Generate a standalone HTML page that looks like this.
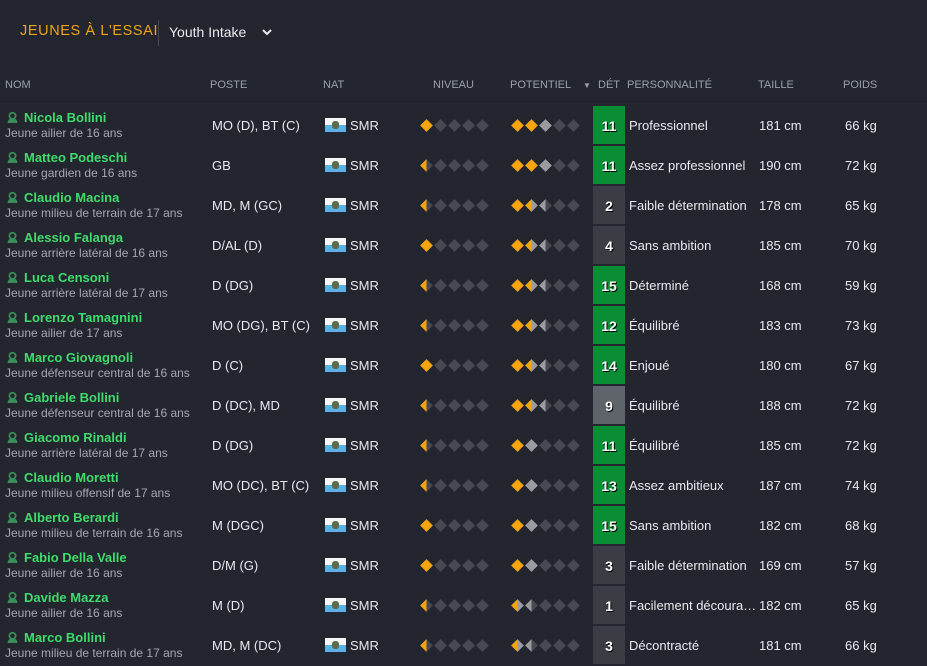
<!DOCTYPE html>
<html><head><meta charset="utf-8"><style>
body{margin:0;width:927px;height:662px;background:#23262f;font-family:"Liberation Sans",sans-serif;overflow:hidden;position:relative;color:#e6e8ea}
.title{position:absolute;left:20px;top:23px;color:#f0a21a;font-size:14.5px;letter-spacing:.6px}
.sep{position:absolute;left:158px;top:20px;width:1px;height:26px;background:#444852}
.yi{position:absolute;left:169px;top:24px;font-size:14px;color:#e8eaee}
.chev{position:absolute;left:262px;top:28px}
.hdr{position:absolute;top:79px;font-size:11px;color:#9aa0aa}
.hline{position:absolute;left:0;top:101px;width:927px;height:1px;background:#1d2027}
.row{position:absolute;left:0;width:927px;height:40px}
.nm{position:absolute;left:24px;top:5px;font-weight:bold;font-size:13px;color:#3ddc6c}
.ic{position:absolute;left:7px;top:7px;width:11px;height:11px}
.sub{position:absolute;left:5px;top:21px;font-size:12px;color:#a4a8b0}
.v{position:absolute;top:13px;font-size:13px;color:#e8eaee}
.flag{position:absolute;left:325px;top:13px;width:21px;height:14px;background:linear-gradient(#f4f6f8 50%,#5eb1e6 50%)}
.flag:after{content:"";position:absolute;left:7px;top:3px;width:7px;height:8px;border-radius:3px;background:#5c6b4a}
.dm{position:absolute;top:16px}
.d{position:absolute;width:9px;height:9px;transform:rotate(45deg);background:#474a52}
.F{background:#f6a412}.G{background:#9a9ca0}
.H{background:linear-gradient(45deg,#f6a412 50%,#474a52 50%)}
.HG{background:linear-gradient(45deg,#f6a412 50%,#9a9ca0 50%)}
.g{background:linear-gradient(45deg,#9a9ca0 50%,#474a52 50%)}
.det{position:absolute;left:593px;top:1px;width:32px;height:38px;font-size:14px;font-weight:bold;color:#fff;text-align:center;line-height:40px;text-shadow:1px 1px 0 #000}
.gr{background:#0b8d36}.dk{background:#3a3d44}.lg{background:#5f646b}
</style></head><body>
<div class="title">JEUNES À L'ESSAI</div><div class="sep"></div><div class="yi">Youth Intake</div>
<svg class="chev" width="10" height="8" viewBox="0 0 10 8"><path d="M1 2l4 4 4-4" stroke="#e8eaee" stroke-width="2" fill="none"/></svg>
<div class="hdr" style="left:5px">NOM</div><div class="hdr" style="left:210px">POSTE</div><div class="hdr" style="left:323px">NAT</div><div class="hdr" style="left:433px">NIVEAU</div><div class="hdr" style="left:510px">POTENTIEL</div><div class="hdr" style="left:583px;font-size:8px;top:81px">▼</div><div class="hdr" style="left:598px">DÉT</div><div class="hdr" style="left:627px">PERSONNALITÉ</div><div class="hdr" style="left:758px">TAILLE</div><div class="hdr" style="left:843px">POIDS</div>
<div class="hline"></div>
<div id="rows"></div>
<script>
const R=[
["Nicola Bollini","Jeune ailier de 16 ans","MO (D), BT (C)","F","F F G D D",11,"gr","Professionnel",181,66],
["Matteo Podeschi","Jeune gardien de 16 ans","GB","H","F F G D D",11,"gr","Assez professionnel",190,72],
["Claudio Macina","Jeune milieu de terrain de 17 ans","MD, M (GC)","H","F HG g D D",2,"dk","Faible détermination",178,65],
["Alessio Falanga","Jeune arrière latéral de 16 ans","D/AL (D)","F","F HG g D D",4,"dk","Sans ambition",185,70],
["Luca Censoni","Jeune arrière latéral de 17 ans","D (DG)","H","F HG g D D",15,"gr","Déterminé",168,59],
["Lorenzo Tamagnini","Jeune ailier de 17 ans","MO (DG), BT (C)","H","F HG g D D",12,"gr","Équilibré",183,73],
["Marco Giovagnoli","Jeune défenseur central de 16 ans","D (C)","F","F HG g D D",14,"gr","Enjoué",180,67],
["Gabriele Bollini","Jeune défenseur central de 16 ans","D (DC), MD","H","F HG g D D",9,"lg","Équilibré",188,72],
["Giacomo Rinaldi","Jeune arrière latéral de 17 ans","D (DG)","H","F G D D D",11,"gr","Équilibré",185,72],
["Claudio Moretti","Jeune milieu offensif de 17 ans","MO (DC), BT (C)","H","F G D D D",13,"gr","Assez ambitieux",187,74],
["Alberto Berardi","Jeune milieu de terrain de 16 ans","M (DGC)","F","F G D D D",15,"gr","Sans ambition",182,68],
["Fabio Della Valle","Jeune ailier de 16 ans","D/M (G)","F","F G D D D",3,"dk","Faible détermination",169,57],
["Davide Mazza","Jeune ailier de 16 ans","M (D)","H","HG g D D D",1,"dk","Facilement découra…",182,65],
["Marco Bollini","Jeune milieu de terrain de 17 ans","MD, M (DC)","H","HG g D D D",3,"dk","Décontracté",181,66]];
let h="";
R.forEach((r,i)=>{
 const niv=[r[3],"D","D","D","D"],pot=r[4].split(" ");
 const dia=(a,x)=>a.map((c,k)=>`<span class="d ${c}" style="left:${x+k*14}px"></span>`).join("");
 h+=`<div class="row" style="top:${105+i*40}px">
<svg class="ic" viewBox="0 0 10 10"><circle cx="5" cy="3.5" r="2.8" fill="none" stroke="#3a8f56" stroke-width="1.6"/><path d="M0.5 10a4.5 4.5 0 0 1 9 0z" fill="#3a8f56"/></svg>
<div class="nm">${r[0]}</div><div class="sub">${r[1]}</div>
<div class="v" style="left:212px">${r[2]}</div><div class="flag"></div><div class="v" style="left:350px">SMR</div>
<div class="dm">${dia(niv,422)}${dia(pot,513)}</div>
<div class="det ${r[6]}">${r[5]}</div>
<div class="v" style="left:629px">${r[7]}</div><div class="v" style="left:759px">${r[8]} cm</div><div class="v" style="left:845px">${r[9]} kg</div></div>`;
});
document.getElementById("rows").innerHTML=h;
</script>
</body></html>
